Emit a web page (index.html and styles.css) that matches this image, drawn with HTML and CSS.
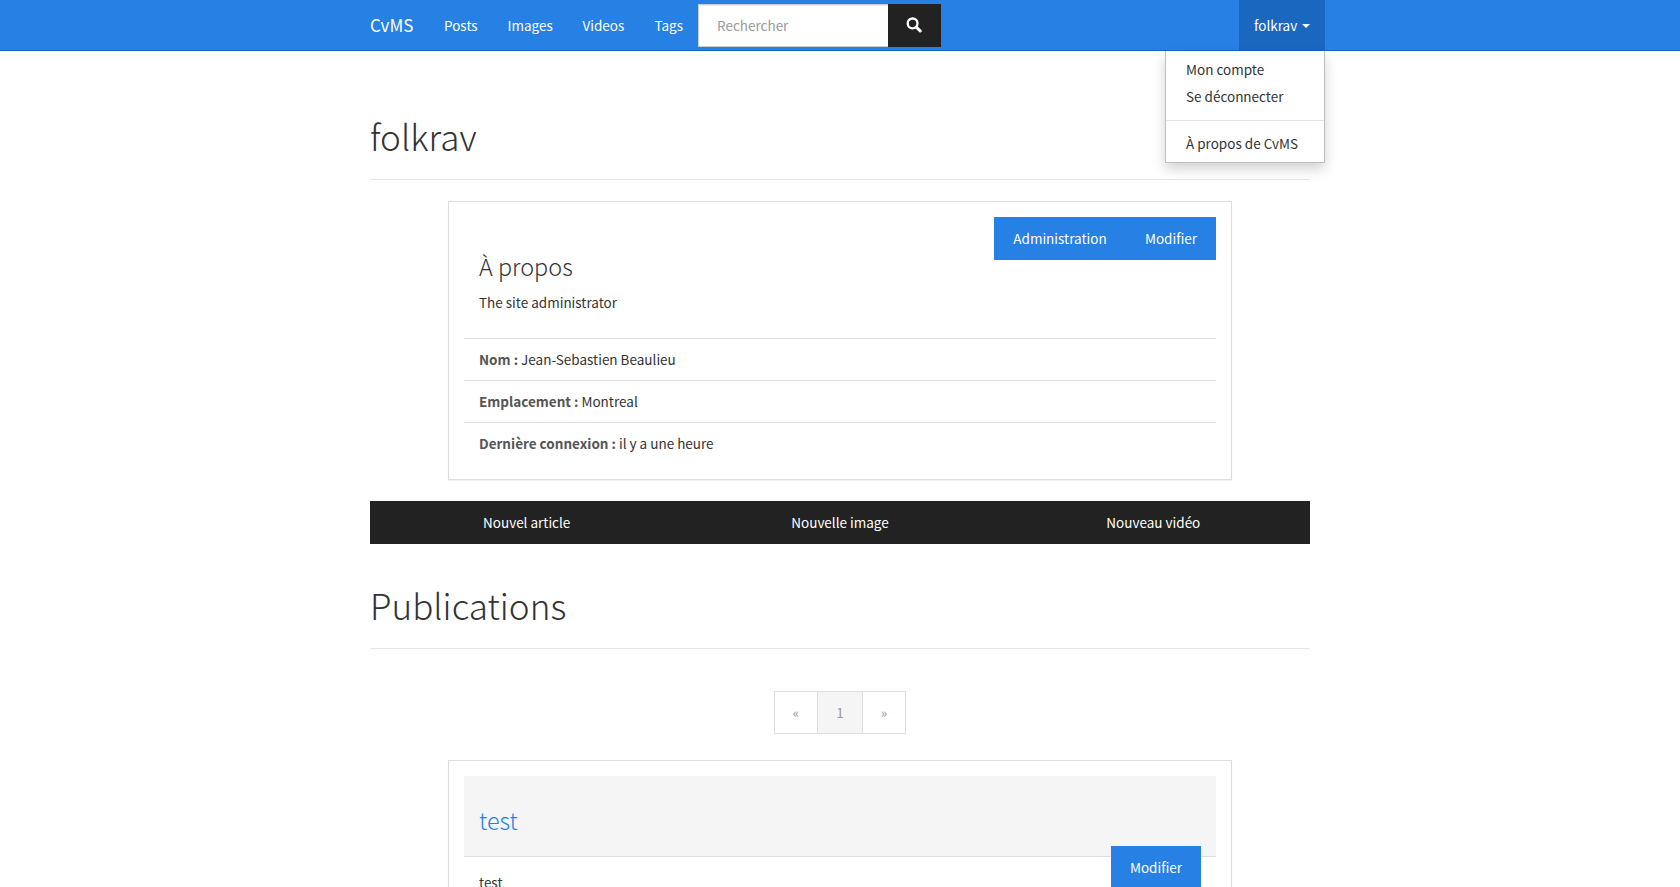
FILE: index.html
```html
<!DOCTYPE html>
<html lang="fr">
<head>
<meta charset="utf-8">
<title>CvMS</title>
<link rel="stylesheet" href="styles.css">
</head>
<body>
<nav class="navbar">
  <div class="navbar-inner">
    <a class="brand">CvMS</a>
    <a class="nav-link posts">Posts</a>
    <a class="nav-link images">Images</a>
    <a class="nav-link videos">Videos</a>
    <a class="nav-link tags">Tags</a>
    <form class="search">
      <input class="search-input" type="text" placeholder="Rechercher">
      <button class="search-btn" type="button" aria-label="Rechercher">
        <svg width="16" height="16" viewBox="0 0 16 16"><circle cx="6.6" cy="6.4" r="4.9" fill="none" stroke="#fff" stroke-width="2.3"/><path d="M10.2 10.1 14.2 13.9" stroke="#fff" stroke-width="3" stroke-linecap="round"/></svg>
      </button>
    </form>
    <div class="user">
      <a class="user-toggle">folkrav<span class="caret"></span></a>
      <div class="menu">
        <a class="menu-item">Mon compte</a>
        <a class="menu-item">Se déconnecter</a>
        <div class="divider"></div>
        <a class="menu-item">À propos de CvMS</a>
      </div>
    </div>
  </div>
</nav>
<main class="container">
  <h1 class="page-header">folkrav</h1>
  <section class="panel profile">
    <div class="about">
      <div class="about-text">
        <h3 class="title">À propos</h3>
        <p class="text">The site administrator</p>
      </div>
      <div class="btn-group"><a class="btn admin">Administration</a><a class="btn edit">Modifier</a></div>
    </div>
    <div class="row"><strong>Nom :</strong> Jean-Sebastien Beaulieu</div>
    <div class="row"><strong>Emplacement :</strong> Montreal</div>
    <div class="row"><strong>Dernière connexion :</strong> il y a une heure</div>
  </section>
  <div class="actions"><a>Nouvel article</a><a>Nouvelle image</a><a>Nouveau vidéo</a></div>
  <h1 class="page-header second">Publications</h1>
  <div class="pagination"><span class="page">«</span><span class="page current">1</span><span class="page">»</span></div>
  <section class="panel post">
    <div class="post-heading"><h3 class="title link">test</h3></div>
    <div class="post-body"><p class="text">test</p><a class="btn post-edit">Modifier</a></div>
  </section>
</main>
</body>
</html>
```
FILE: styles.css
```css
* { box-sizing: border-box; }
html { height: 100%; overflow: hidden; }
body {
  margin: 0;
  height: 100%;
  overflow: hidden;
  background: #fff;
  color: #333;
  font-family: "Source Sans Pro", "Noto Sans CJK SC", "Open Sans", sans-serif;
  font-size: 13.5px;
  line-height: 21px;
}
h1, h3, p { margin: 0; font-weight: 300; }
p { font-weight: 400; }
.navbar { height: 51px; background: #2780e3; border-bottom: 1px solid #1967be; color: #fff; }
.navbar-inner { width: 970px; height: 51px; margin: 0 auto; display: flex; line-height: 50px; }
.brand { width: 74px; padding-left: 15px; font-size: 17px; }
.nav-link { padding-left: 15px; }
.posts { width: 63.5px; }
.images { width: 75px; }
.videos { width: 72px; }
.tags { width: 58.5px; }
.search { display: flex; width: 243px; height: 43px; margin: 4px 0 0; }
.search-input {
  width: 190px;
  height: 43px;
  padding: 0 18px 2px;
  border: 1px solid #ccc;
  border-right: 0;
  border-radius: 0;
  box-shadow: inset 0 1px 1px rgba(0, 0, 0, .075);
  font: inherit;
  line-height: 21px;
  outline: 0;
}
.search-input::placeholder { color: #999; opacity: 1; }
.search-btn { width: 53px; padding: 0 1px 1px 0; border: 0; background: #222; display: flex; align-items: center; justify-content: center; }
.user { position: relative; width: 86px; margin-left: auto; }
.user-toggle { display: flex; align-items: center; height: 51px; padding: 0 15px 1px; background: #1967be; border-bottom: 1px solid #1862b5; }
.caret { margin: 3px 0 0 5px; border: 4px solid transparent; border-top-color: #fff; border-bottom: 0; }
.menu {
  position: absolute;
  top: 51px;
  right: 0;
  width: 160px;
  height: 112px;
  padding-top: 5px;
  background: #fff;
  border: 1px solid #bfbfbf;
  border-top: 0;
  box-shadow: 0 6px 12px rgba(0, 0, 0, .175);
  color: #333;
  line-height: 27px;
}
.menu-item { display: block; height: 27px; padding-left: 20px; }
.divider { height: 1px; margin: 10px 0 9px; background: #e5e5e5; }
.container { width: 940px; margin: 0 auto; }
.page-header {
  height: 64px;
  margin-top: 65px;
  border-bottom: 1px solid #e6e6e6;
  font-size: 35.1px;
  line-height: 39px;
}
.panel { width: 784px; margin: 21px auto 0; padding: 15px; border: 1px solid #ddd; box-shadow: 0 1px 1px rgba(0, 0, 0, .05); }
.profile { height: 279px; }
.about { display: flex; justify-content: space-between; height: 121px; padding-left: 15px; }
.title { font-size: 23.4px; line-height: 29px; }
.about .title { padding-top: 35px; }
.about .text { margin-top: 11px; }
.btn-group { display: flex; height: 43px; }
.btn { height: 43px; background: #2780e3; color: #fff; line-height: 43px; text-align: center; }
.admin { width: 132px; }
.edit { width: 90px; }
.row { height: 42px; padding: 10px 15px; border-top: 1px solid #ddd; }
.row strong { color: #555; font-weight: 700; }
.actions { display: grid; grid-template-columns: repeat(3, 1fr); height: 43px; margin-top: 21px; background: #222; color: #fff; line-height: 43px; text-align: center; }
.second { margin-top: 41px; }
.pagination { display: flex; width: 132px; height: 43px; margin: 42px auto 0; border: 1px solid #ddd; color: #999; line-height: 41px; text-align: center; }
.page { flex: 1; }
.current { flex: 0 0 46px; border: 1px solid #ddd; border-width: 0 1px; background: #f5f5f5; }
.post { margin-top: 26px; height: 200px; }
.post-heading { height: 81px; padding: 30px 15px 0; background: #f5f5f5; border-bottom: 1px solid #ddd; }
.link { color: #2780e3; }
.post-body { display: flex; justify-content: space-between; align-items: flex-start; padding: 15px 15px 0; }
.post-edit { width: 90px; margin-top: -26px; }
```
